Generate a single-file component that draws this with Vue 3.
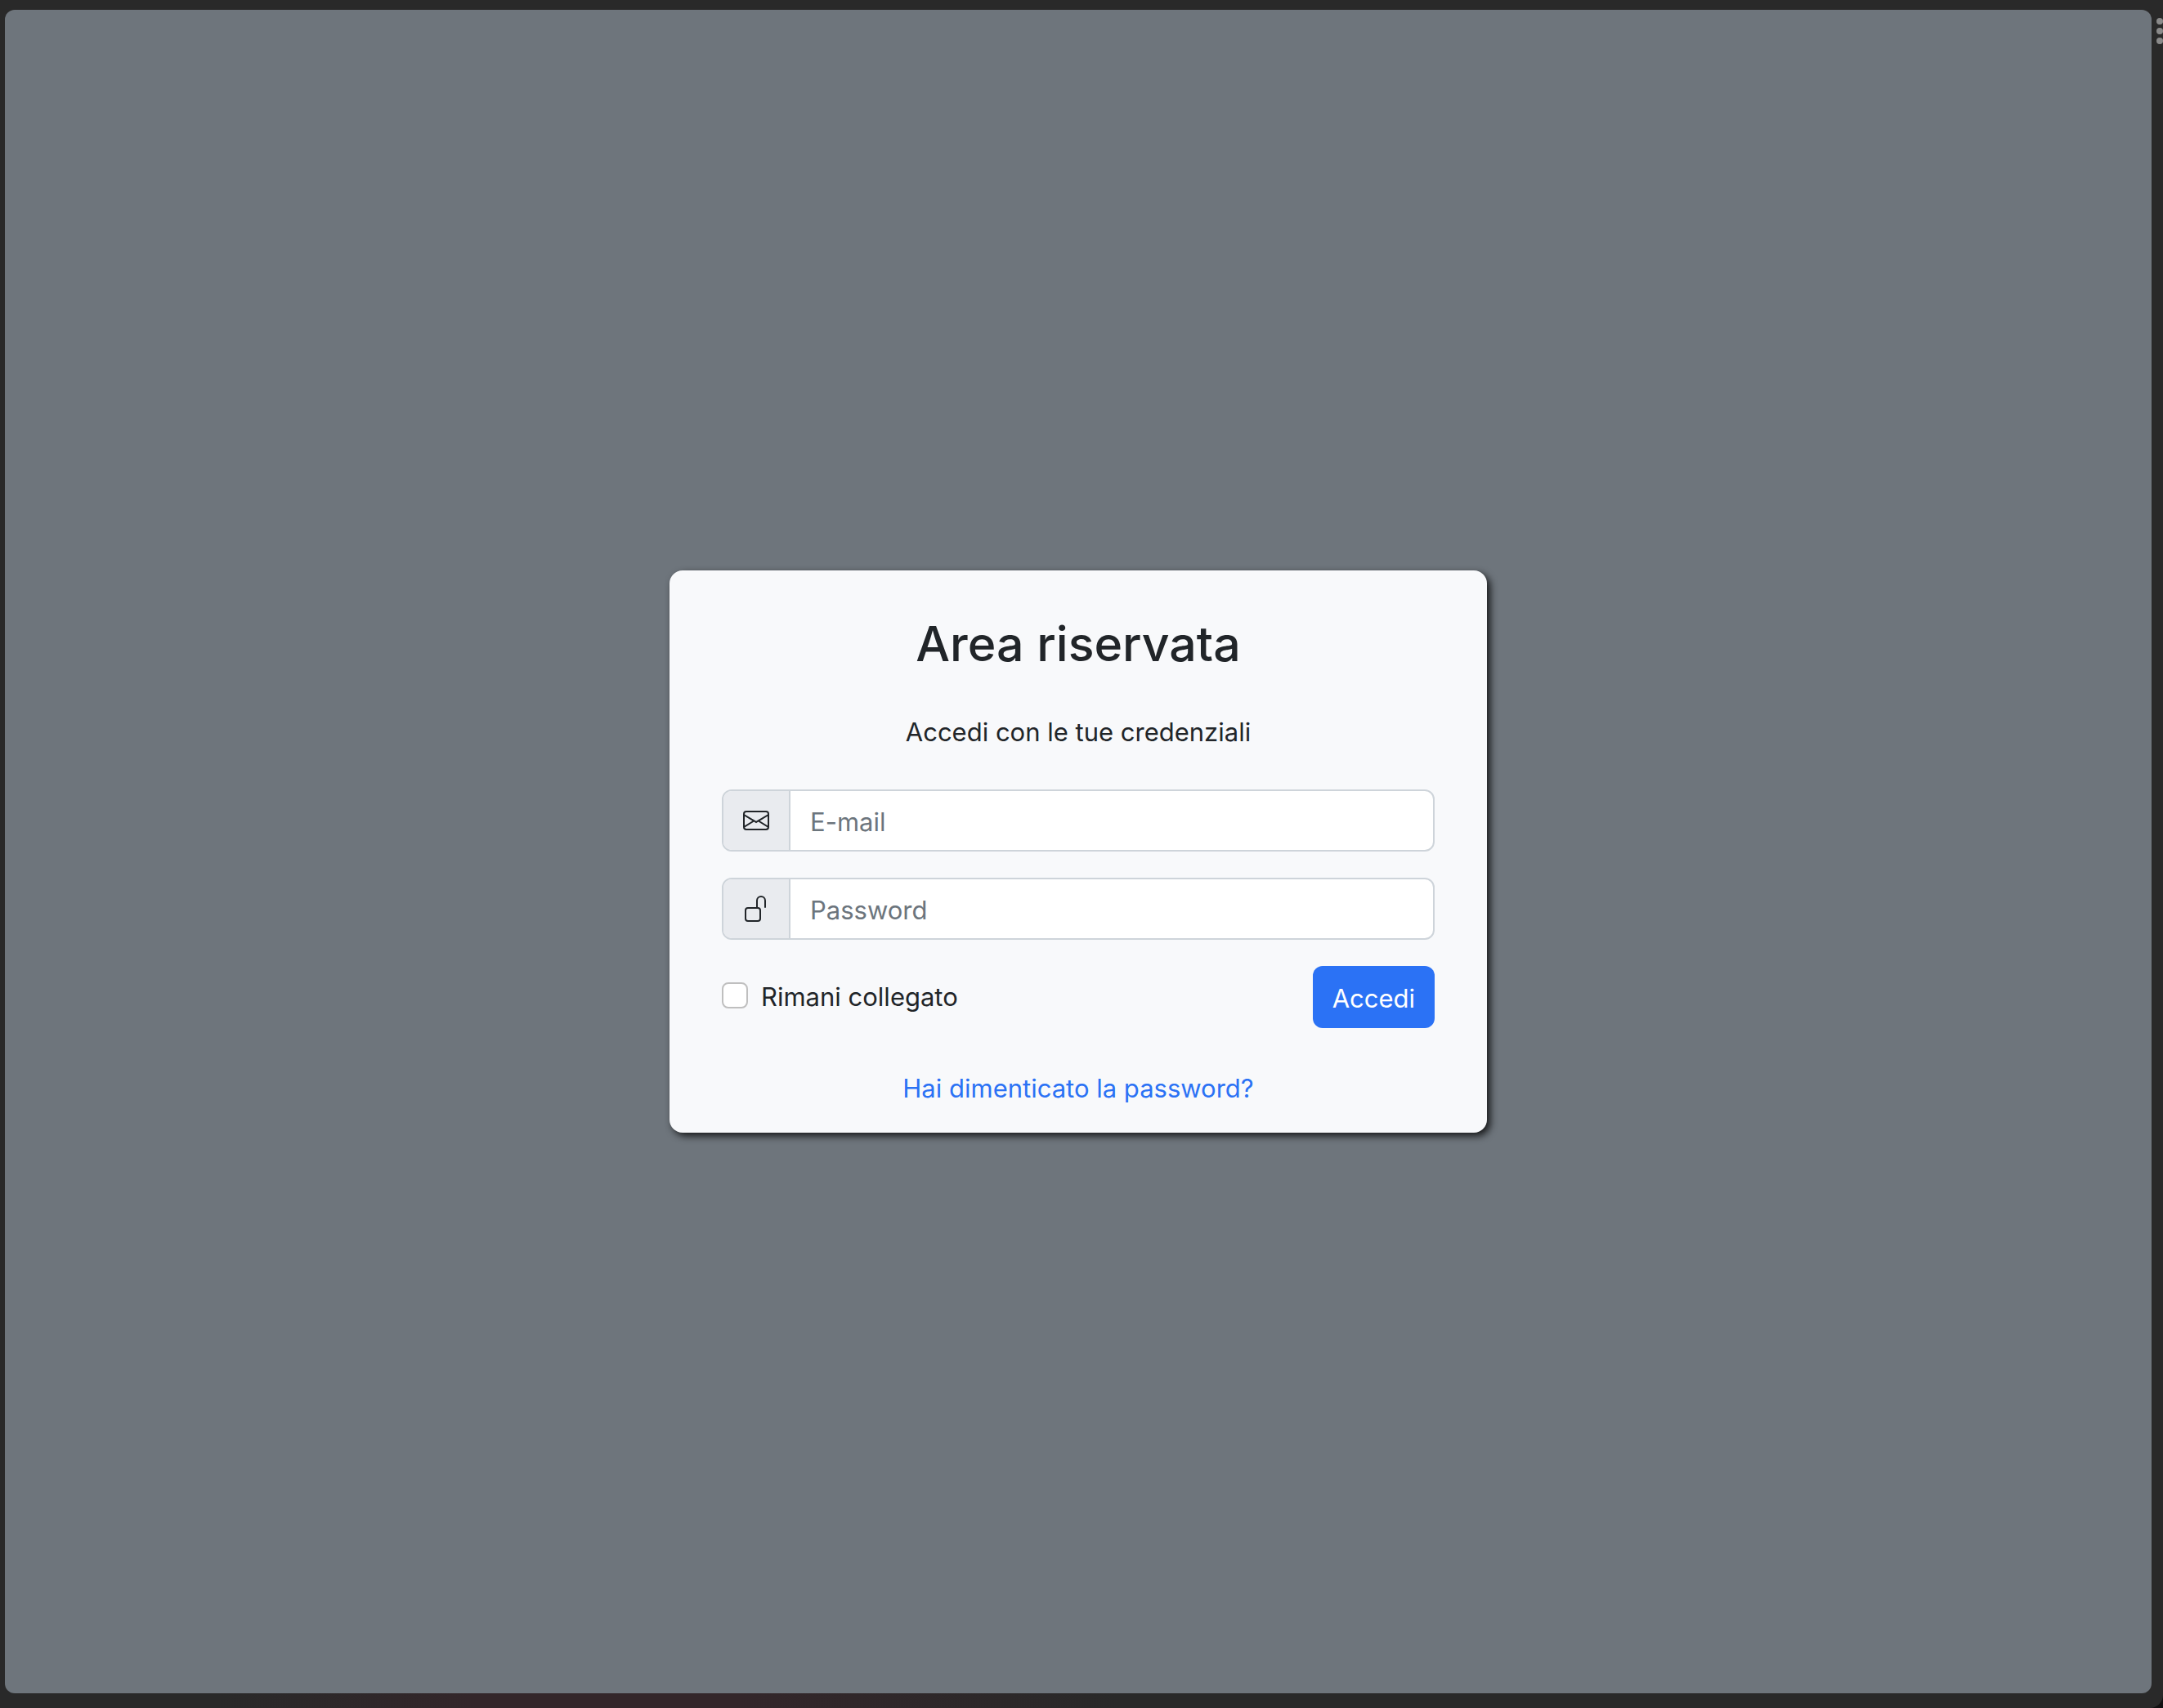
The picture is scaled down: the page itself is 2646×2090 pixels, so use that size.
<script setup>
import { ref } from 'vue'

const email = ref('')
const password = ref('')
const remember = ref(false)
</script>

<template>
  <div class="window">
    <div class="dots" aria-hidden="true"><i></i><i></i><i></i></div>
    <main class="page">
      <form class="card" @submit.prevent>
        <h1>Area riservata</h1>
        <p class="lead">Accedi con le tue credenziali</p>

        <div class="fields">
          <div class="group">
            <label class="addon" for="email" aria-label="E-mail">
              <svg viewBox="0 0 16 16" fill="currentColor" aria-hidden="true">
                <path d="M0 4a2 2 0 0 1 2-2h12a2 2 0 0 1 2 2v8a2 2 0 0 1-2 2H2a2 2 0 0 1-2-2V4Zm2-1a1 1 0 0 0-1 1v.217l7 4.2 7-4.2V4a1 1 0 0 0-1-1H2Zm13 2.383-4.708 2.825L15 11.105V5.383Zm-.034 6.876-5.64-3.471L8 9.583l-1.326-.795-5.64 3.47A1 1 0 0 0 2 13h12a1 1 0 0 0 .966-.741ZM1 11.105l4.708-2.897L1 5.383v5.722Z" />
              </svg>
            </label>
            <input id="email" v-model="email" type="email" placeholder="E-mail" />
          </div>

          <div class="group">
            <label class="addon" for="password" aria-label="Password">
              <svg viewBox="0 0 16 16" fill="currentColor" aria-hidden="true">
                <path d="M11 1a2 2 0 0 0-2 2v4a2 2 0 0 1 2 2v5a2 2 0 0 1-2 2H3a2 2 0 0 1-2-2V9a2 2 0 0 1 2-2h5V3a3 3 0 0 1 6 0v4a.5.5 0 0 1-1 0V3a2 2 0 0 0-2-2zM3 8a1 1 0 0 0-1 1v5a1 1 0 0 0 1 1h6a1 1 0 0 0 1-1V9a1 1 0 0 0-1-1H3z" />
              </svg>
            </label>
            <input id="password" v-model="password" type="password" placeholder="Password" />
          </div>

          <div class="actions">
            <div class="check">
              <input id="remember" v-model="remember" type="checkbox" />
              <label for="remember">Rimani collegato</label>
            </div>
            <button type="submit">Accedi</button>
          </div>
        </div>

        <a class="forgot" href="#">Hai dimenticato la password?</a>
      </form>
    </main>
  </div>
</template>

<style>
body {
  margin: 0;
  background: #111;
}
</style>

<style scoped>
* {
  box-sizing: border-box;
}

.window {
  position: relative;
  display: flex;
  min-height: 100vh;
  padding: 12px 14px 18px 6px;
  border-bottom-right-radius: 16px;
  background:
    linear-gradient(90deg, transparent 10%, #33262a 22%, #33262a 34%, transparent 52%) bottom / 100% 18px no-repeat,
    #292929;
  color: #212529;
  font-family: Inter, "Liberation Sans", sans-serif;
  font-size: 31px;
  line-height: 48px;
}

.dots {
  position: absolute;
  top: 22px;
  right: 0;
  display: grid;
  gap: 4px;
}

.dots i {
  width: 8px;
  height: 8px;
  border-radius: 50%;
  background: #8a8a8a;
}

.page {
  flex: 1;
  display: flex;
  align-items: center;
  justify-content: center;
  border-radius: 12px;
  background: #6e757c;
}

.card {
  display: flex;
  flex-direction: column;
  width: 100%;
  max-width: 1000px;
  padding: 52px 64px 30px;
  border-radius: 16px;
  background: #f8f9fb;
  box-shadow: 4px 4px 10px rgba(0, 0, 0, 0.8);
  text-align: center;
}

h1 {
  margin: 0 0 46px;
  font-size: 59px;
  font-weight: 500;
  line-height: 76px;
}

.lead {
  margin: 0 0 46px;
}

.fields {
  display: flex;
  flex-direction: column;
  gap: 32px;
}

.group {
  display: flex;
  height: 76px;
  overflow: hidden;
  border: 2px solid #ced4da;
  border-radius: 12px;
  background: #fff;
}

.addon {
  display: flex;
  align-items: center;
  padding: 0 24px;
  border-right: 2px solid #ced4da;
  background: #e9ebef;
}

.addon svg {
  display: block;
  width: 32px;
  height: 32px;
}

.group input {
  flex: 1;
  min-width: 0;
  padding: 4px 24px 0;
  border: 0;
  outline: 0;
  background: none;
  color: inherit;
  font: inherit;
}

.group input::placeholder {
  color: #6c757d;
  opacity: 1;
}

.actions {
  display: flex;
  justify-content: space-between;
  align-items: flex-start;
}

.check {
  display: flex;
  align-items: center;
  gap: 16px;
  height: 72px;
}

.check input {
  appearance: none;
  width: 32px;
  height: 32px;
  margin: 0;
  border: 2px solid #bfbfbf;
  border-radius: 8px;
  background: #fff;
}

.check input:checked {
  border-color: #2b72f5;
  background: #2b72f5;
}

.check label {
  padding-top: 4px;
}

button {
  height: 76px;
  padding: 4px 24px 0;
  border: 0;
  border-radius: 12px;
  background: #2b72f5;
  color: #fff;
  font: inherit;
}

.forgot {
  align-self: center;
  margin-top: 50px;
  color: #2b72f5;
  text-decoration: none;
}
</style>
